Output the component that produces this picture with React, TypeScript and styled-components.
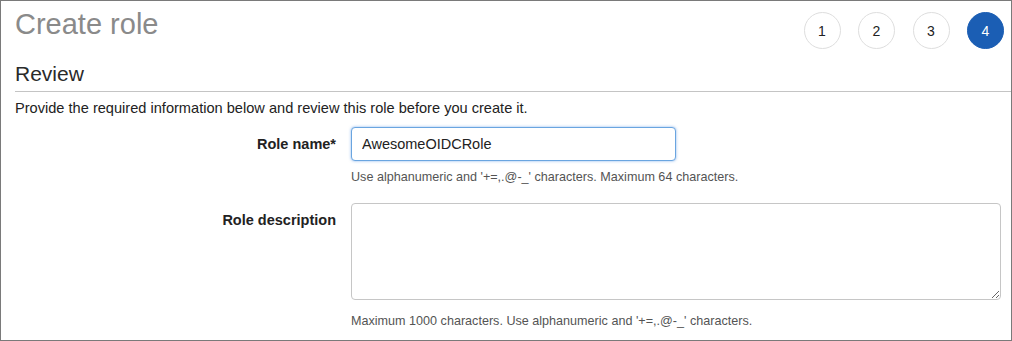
import React from "react";
import styled, { createGlobalStyle } from "styled-components";

const GlobalStyle = createGlobalStyle`
  html, body {
    margin: 0;
    padding: 0;
    background: #fff;
  }
  body {
    font-family: "Liberation Sans", Arial, Helvetica, sans-serif;
    color: #222;
  }
`;

const Frame = styled.div`
  box-sizing: border-box;
  width: 1012px;
  height: 341px;
  border: 1px solid #7a7a7a;
  padding: 3px 7px 0 14px;
  overflow: hidden;
`;

const Header = styled.div`
  display: flex;
  justify-content: space-between;
  align-items: flex-start;
`;

const Title = styled.h1`
  margin: 3px 0 0;
  font-size: 29px;
  font-weight: 400;
  line-height: 1.2;
  color: #8a8a8a;
`;

const Steps = styled.div`
  display: flex;
  gap: 17.5px;
  margin-top: 8px;
`;

const Step = styled.div<{ $active?: boolean }>`
  box-sizing: border-box;
  width: 37px;
  height: 37px;
  border-radius: 50%;
  display: flex;
  align-items: center;
  justify-content: center;
  font-size: 14px;
  border: 1px solid ${(p) => (p.$active ? "#1b5eb4" : "#dedede")};
  background: ${(p) => (p.$active ? "#1b5eb4" : "#fff")};
  color: ${(p) => (p.$active ? "#fff" : "#222")};
`;

const SectionTitle = styled.h2`
  margin: 12px -7px 0 0;
  padding-bottom: 5px;
  font-size: 21px;
  font-weight: 400;
  line-height: 1.2;
  color: #2a2a2a;
  border-bottom: 1px solid #c4c4c4;
`;

const Intro = styled.p`
  margin: 6px 0 0;
  font-size: 14.6px;
  line-height: 20px;
  color: #222;
`;

const Form = styled.div`
  display: grid;
  grid-template-columns: 321px 1fr;
  column-gap: 15px;
  row-gap: 18px;
  margin-top: 9px;
`;

const Label = styled.label`
  text-align: right;
  font-size: 14.5px;
  font-weight: 700;
  line-height: 18px;
  padding-top: 8px;
  color: #222;
`;

const Field = styled.div`
  display: flex;
  flex-direction: column;
  align-items: flex-start;
`;

const TextInput = styled.input`
  box-sizing: border-box;
  width: 325px;
  height: 34px;
  padding: 0 10px;
  font-family: inherit;
  font-size: 14.5px;
  color: #222;
  border: 1px solid #6aa5e0;
  border-radius: 4px;
  box-shadow: 0 0 3px rgba(40, 120, 220, 0.55);
  outline: none;
`;

const TextArea = styled.textarea`
  box-sizing: border-box;
  width: 650px;
  height: 97px;
  padding: 8px 10px;
  font-family: inherit;
  font-size: 14.5px;
  border: 1px solid #c6c6c6;
  border-radius: 4px;
  outline: none;
`;

const Hint = styled.div<{ $gap: number }>`
  margin-top: ${(p) => p.$gap}px;
  font-size: 12.6px;
  line-height: 16px;
  color: #545454;
`;

export default function App() {
  return (
    <>
      <GlobalStyle />
      <Frame>
        <Header>
          <Title>Create role</Title>
          <Steps>
            <Step>1</Step>
            <Step>2</Step>
            <Step>3</Step>
            <Step $active>4</Step>
          </Steps>
        </Header>
        <SectionTitle>Review</SectionTitle>
        <Intro>
          Provide the required information below and review this role before
          you create it.
        </Intro>
        <Form>
          <Label htmlFor="role-name">Role name*</Label>
          <Field>
            <TextInput id="role-name" defaultValue="AwesomeOIDCRole" />
            <Hint $gap={8}>
              Use alphanumeric and '+=,.@-_' characters. Maximum 64 characters.
            </Hint>
          </Field>
          <Label htmlFor="role-desc">Role description</Label>
          <Field>
            <TextArea id="role-desc" />
            <Hint $gap={13}>
              Maximum 1000 characters. Use alphanumeric and '+=,.@-_'
              characters.
            </Hint>
          </Field>
        </Form>
      </Frame>
    </>
  );
}
